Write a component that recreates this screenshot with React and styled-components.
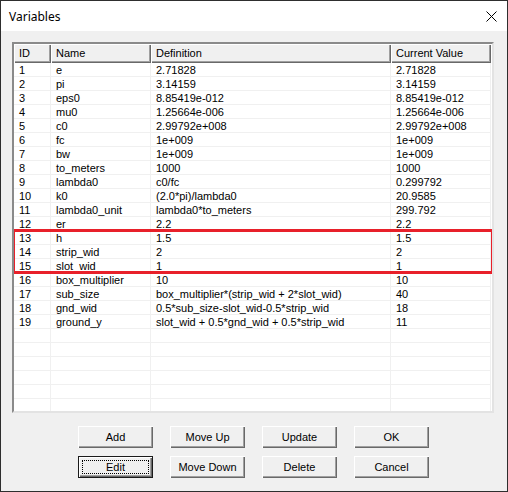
import React from 'react';
import styled, { createGlobalStyle } from 'styled-components';

const GlobalStyle = createGlobalStyle`
  html, body {
    margin: 0;
    padding: 0;
    background: #f0f0f0;
  }
  * {
    box-sizing: border-box;
  }
`;

const Window = styled.div`
  width: 508px;
  height: 492px;
  border: 1px solid #2e2e2e;
  background: #f0f0f0;
  display: flex;
  flex-direction: column;
  font-family: 'Liberation Sans', Arial, sans-serif;
  font-size: 11px;
  color: #000;
`;

const TitleBar = styled.div`
  height: 30px;
  background: #fff;
  display: flex;
  align-items: center;
  justify-content: space-between;
  padding: 0 10px 0 8px;
  font-family: 'Noto Sans', 'Liberation Sans', sans-serif;
  font-size: 12px;
`;

const Body = styled.div`
  padding: 11px 12px 0 11px;
  display: flex;
  flex-direction: column;
`;

const ListFrame = styled.div`
  position: relative;
  width: 482px;
  height: 371px;
  border: 2px solid;
  border-color: #8a8a8a #e3e3e3 #e3e3e3 #8a8a8a;
  background: #fff;
  overflow: hidden;
`;

const cols = '37px 100px 240px 100px';

const HeaderRow = styled.div`
  display: grid;
  grid-template-columns: ${cols} 1fr;
  height: 19px;
`;

const HeaderCell = styled.div`
  background: #f0f0f0;
  padding: 0 5px;
  line-height: 19px;
  white-space: nowrap;
  box-shadow: inset 1px 1px #fff, inset -1px -1px #696969, inset -2px -2px #a0a0a0;
`;

const Row = styled.div`
  display: grid;
  grid-template-columns: ${cols} 1fr;
  height: 14px;
`;

const Cell = styled.div`
  padding: 0 5px;
  line-height: 14px;
  white-space: nowrap;
  overflow: hidden;
  border-right: 1px solid #f0f0f0;
  border-bottom: 1px solid #f0f0f0;
`;

const Highlight = styled.div`
  position: absolute;
  left: -2px;
  right: -2px;
  top: 185px;
  height: 45px;
  border: 3px solid #e8202a;
  pointer-events: none;
`;

const ButtonGrid = styled.div`
  display: grid;
  grid-template-columns: repeat(4, 75px);
  column-gap: 17px;
  row-gap: 8px;
  margin: 13px 0 0 66px;
`;

const Button = styled.button`
  height: 22px;
  padding: 0;
  font-family: 'Liberation Sans', Arial, sans-serif;
  font-size: 11px;
  color: #000;
  background: #f0f0f0;
  border: none;
  position: relative;
  box-shadow: ${(p) =>
    p.$default
      ? 'inset 0 0 0 1px #1a1a1a, inset 2px 2px #fff, inset -2px -2px #696969, inset -3px -3px #a0a0a0'
      : 'inset 1px 1px #fff, inset -1px -1px #696969, inset -2px -2px #a0a0a0'};
`;

const Focus = styled.span`
  position: absolute;
  inset: 4px;
  border: 1px dotted #000;
`;

const rows = [
  ['1', 'e', '2.71828', '2.71828'],
  ['2', 'pi', '3.14159', '3.14159'],
  ['3', 'eps0', '8.85419e-012', '8.85419e-012'],
  ['4', 'mu0', '1.25664e-006', '1.25664e-006'],
  ['5', 'c0', '2.99792e+008', '2.99792e+008'],
  ['6', 'fc', '1e+009', '1e+009'],
  ['7', 'bw', '1e+009', '1e+009'],
  ['8', 'to_meters', '1000', '1000'],
  ['9', 'lambda0', 'c0/fc', '0.299792'],
  ['10', 'k0', '(2.0*pi)/lambda0', '20.9585'],
  ['11', 'lambda0_unit', 'lambda0*to_meters', '299.792'],
  ['12', 'er', '2.2', '2.2'],
  ['13', 'h', '1.5', '1.5'],
  ['14', 'strip_wid', '2', '2'],
  ['15', 'slot_wid', '1', '1'],
  ['16', 'box_multiplier', '10', '10'],
  ['17', 'sub_size', 'box_multiplier*(strip_wid + 2*slot_wid)', '40'],
  ['18', 'gnd_wid', '0.5*sub_size-slot_wid-0.5*strip_wid', '18'],
  ['19', 'ground_y', 'slot_wid + 0.5*gnd_wid + 0.5*strip_wid', '11'],
];

const blanks = Array.from({ length: 7 }, () => ['', '', '', '']);

const CloseIcon = () => (
  <svg width="11" height="11" viewBox="0 0 11 11">
    <path d="M0.5 0.5 L10.5 10.5 M10.5 0.5 L0.5 10.5" stroke="#000" strokeWidth="1" />
  </svg>
);

export default function App() {
  return (
    <>
      <GlobalStyle />
      <Window>
        <TitleBar>
          <span>Variables</span>
          <CloseIcon />
        </TitleBar>
        <Body>
          <ListFrame>
            <HeaderRow>
              <HeaderCell>ID</HeaderCell>
              <HeaderCell>Name</HeaderCell>
              <HeaderCell>Definition</HeaderCell>
              <HeaderCell>Current Value</HeaderCell>
              <div />
            </HeaderRow>
            {[...rows, ...blanks].map((r, i) => (
              <Row key={i}>
                {r.map((c, j) => (
                  <Cell key={j}>{c}</Cell>
                ))}
                <div />
              </Row>
            ))}
            <Highlight />
          </ListFrame>
          <ButtonGrid>
            <Button>Add</Button>
            <Button>Move Up</Button>
            <Button>Update</Button>
            <Button>OK</Button>
            <Button $default>
              <Focus />
              Edit
            </Button>
            <Button>Move Down</Button>
            <Button>Delete</Button>
            <Button>Cancel</Button>
          </ButtonGrid>
        </Body>
      </Window>
    </>
  );
}
